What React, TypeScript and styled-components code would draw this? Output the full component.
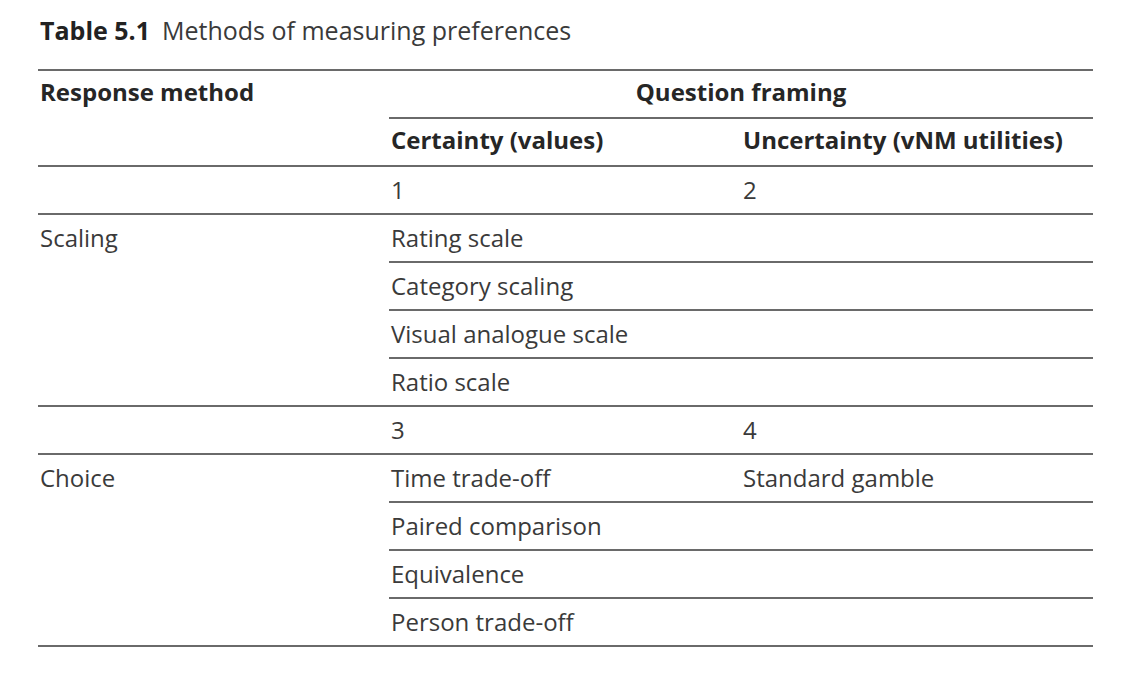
import React from "react";
import styled, { createGlobalStyle } from "styled-components";

const Global = createGlobalStyle`
  html, body { margin: 0; padding: 0; background: #ffffff; }
  body { font-family: "Open Sans", "Noto Sans", sans-serif; color: #3a3a3a; }
`;

const Page = styled.div`
  padding: 12px 29px 0 38px;
  width: 1055px;
`;

const Caption = styled.div`
  font-size: 25px;
  line-height: 36px;
  color: #3a3a3a;
  padding-left: 2px;
  margin-bottom: 21px;
`;

const CaptionLabel = styled.span`
  font-weight: 700;
  color: #222;
  margin-right: 12px;
`;

const Table = styled.table`
  width: 1055px;
  border-collapse: separate;
  border-spacing: 0;
  table-layout: fixed;
  border-top: 2px solid #6a6a6a;
`;

const Cell = styled.td<{ $line?: boolean; $head?: boolean; $center?: boolean }>`
  padding: 0 0 0 ${(p) => (p.$center ? "0" : "2px")};
  height: 46px;
  line-height: ${(p) => (p.$head ? "41px" : "45px")};
  font-size: 24px;
  vertical-align: top;
  white-space: nowrap;
  text-align: ${(p) => (p.$center ? "center" : "left")};
  font-weight: ${(p) => (p.$head ? 700 : 400)};
  color: ${(p) => (p.$head ? "#262626" : "#3a3a3a")};
  border-bottom: ${(p) => (p.$line ? "2px solid #6a6a6a" : "0")};
`;

const Col = styled.col<{ $w: number }>`
  width: ${(p) => p.$w}px;
`;

type Group = { num: [string, string]; label: string; rows: [string, string][] };

const groups: Group[] = [
  {
    num: ["1", "2"],
    label: "Scaling",
    rows: [
      ["Rating scale", ""],
      ["Category scaling", ""],
      ["Visual analogue scale", ""],
      ["Ratio scale", ""],
    ],
  },
  {
    num: ["3", "4"],
    label: "Choice",
    rows: [
      ["Time trade-off", "Standard gamble"],
      ["Paired comparison", ""],
      ["Equivalence", ""],
      ["Person trade-off", ""],
    ],
  },
];

export default function App() {
  return (
    <Page>
      <Global />
      <Caption>
        <CaptionLabel>Table 5.1</CaptionLabel>Methods of measuring preferences
      </Caption>
      <Table>
        <colgroup>
          <Col $w={351} />
          <Col $w={352} />
          <Col $w={352} />
        </colgroup>
        <thead>
          <tr>
            <Cell as="th" rowSpan={2} $head $line>
              Response method
            </Cell>
            <Cell as="th" colSpan={2} $head $center $line>
              Question framing
            </Cell>
          </tr>
          <tr>
            <Cell as="th" $head $line>
              Certainty (values)
            </Cell>
            <Cell as="th" $head $line>
              Uncertainty (vNM utilities)
            </Cell>
          </tr>
        </thead>
        <tbody>
          {groups.map((g) => (
            <React.Fragment key={g.label}>
              <tr>
                <Cell $line />
                <Cell $line>{g.num[0]}</Cell>
                <Cell $line>{g.num[1]}</Cell>
              </tr>
              {g.rows.map((r, i) => (
                <tr key={r[0]}>
                  {i === 0 && (
                    <Cell rowSpan={g.rows.length} $line>
                      {g.label}
                    </Cell>
                  )}
                  <Cell $line>{r[0]}</Cell>
                  <Cell $line>{r[1]}</Cell>
                </tr>
              ))}
            </React.Fragment>
          ))}
        </tbody>
      </Table>
    </Page>
  );
}
